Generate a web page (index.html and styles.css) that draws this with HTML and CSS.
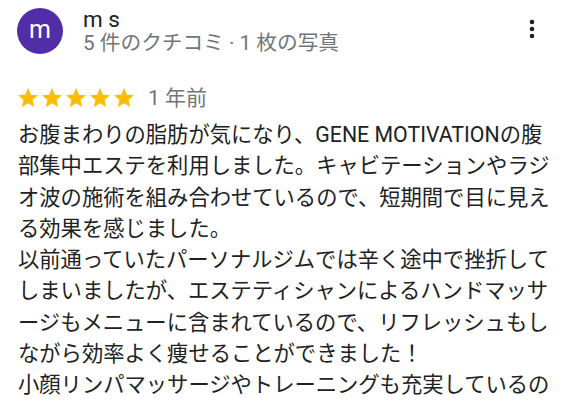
FILE: index.html
```html
<!DOCTYPE html>
<html lang="ja">
<head>
<meta charset="utf-8">
<link rel="stylesheet" href="styles.css">
</head>
<body>
<div class="review">
  <div class="header">
    <div class="avatar">m</div>
    <div class="who">
      <div class="name">m s</div>
      <div class="meta">5 件のクチコミ · 1 枚の写真</div>
    </div>
    <div class="more">
      <svg width="12" height="24" viewBox="0 0 12 24"><circle cx="6" cy="5" r="2.3"/><circle cx="6" cy="12" r="2.3"/><circle cx="6" cy="19" r="2.3"/></svg>
    </div>
  </div>
  <div class="rating">
    <div class="stars">
      <svg width="24" height="24" viewBox="0 0 24 24"><path d="M12 17.27L18.18 21l-1.64-7.030L22 9.24l-7.19-.61L12 2 9.19 8.63 2 9.24l5.46 4.73L5.82 21z"/></svg>
      <svg width="24" height="24" viewBox="0 0 24 24"><path d="M12 17.27L18.18 21l-1.64-7.03L22 9.24l-7.19-.61L12 2 9.19 8.63 2 9.24l5.46 4.73L5.82 21z"/></svg>
      <svg width="24" height="24" viewBox="0 0 24 24"><path d="M12 17.27L18.18 21l-1.64-7.03L22 9.24l-7.19-.61L12 2 9.19 8.63 2 9.24l5.46 4.73L5.82 21z"/></svg>
      <svg width="24" height="24" viewBox="0 0 24 24"><path d="M12 17.27L18.18 21l-1.64-7.03L22 9.24l-7.19-.61L12 2 9.19 8.63 2 9.24l5.46 4.73L5.82 21z"/></svg>
      <svg width="24" height="24" viewBox="0 0 24 24"><path d="M12 17.27L18.18 21l-1.64-7.03L22 9.24l-7.19-.61L12 2 9.19 8.63 2 9.24l5.46 4.73L5.82 21z"/></svg>
    </div>
    <span class="date">1 年前</span>
  </div>
  <div class="text">お腹まわりの脂肪が気になり、GENE MOTIVATIONの腹部集中エステを利用しました。キャビテーションやラジオ波の施術を組み合わせているので、短期間で目に見える効果を感じました。<br>以前通っていたパーソナルジムでは辛く途中で挫折してしまいましたが、エステティシャンによるハンドマッサージもメニューに含まれているので、リフレッシュもしながら効率よく痩せることができました！<br>小顔リンパマッサージやトレーニングも充実しているので、首や肩のこりも軽くなり、全身がすっきりしました。</div>
</div>
</body>
</html>
```

FILE: styles.css
```css
html, body {
  margin: 0;
  padding: 0;
  background: #ffffff;
}
body {
  font-family: Roboto, "Noto Sans CJK JP", sans-serif;
  color: #202124;
  overflow: hidden;
  height: 404px;
}
.review {
  padding: 7px 14px 0 17px;
}
.header {
  display: flex;
  align-items: center;
}
.avatar {
  width: 46px;
  height: 46px;
  border-radius: 50%;
  background: #512da8;
  color: #ffffff;
  font-size: 25px;
  line-height: 44px;
  text-align: center;
  flex: none;
}
.who {
  margin-left: 20px;
  flex: 1;
}
.name {
  font-size: 22.5px;
  line-height: 24px;
  color: #202124;
}
.meta {
  font-size: 20.7px;
  line-height: 24px;
  color: #70757a;
}
.more {
  display: flex;
  margin-right: 17px;
  margin-top: -4px;
}
.more svg {
  fill: #202124;
}
.rating {
  display: flex;
  align-items: center;
  margin-top: 31px;
  margin-left: -1px;
}
.stars {
  display: flex;
}
.stars svg {
  fill: #fbbc04;
  display: block;
}
.date {
  margin-left: 12px;
  font-size: 21px;
  line-height: 24px;
  color: #70757a;
}
.text {
  margin-top: 9px;
  padding-left: 1px;
  font-size: 21.3px;
  line-height: 31.3px;
  color: #202124;
}
```
